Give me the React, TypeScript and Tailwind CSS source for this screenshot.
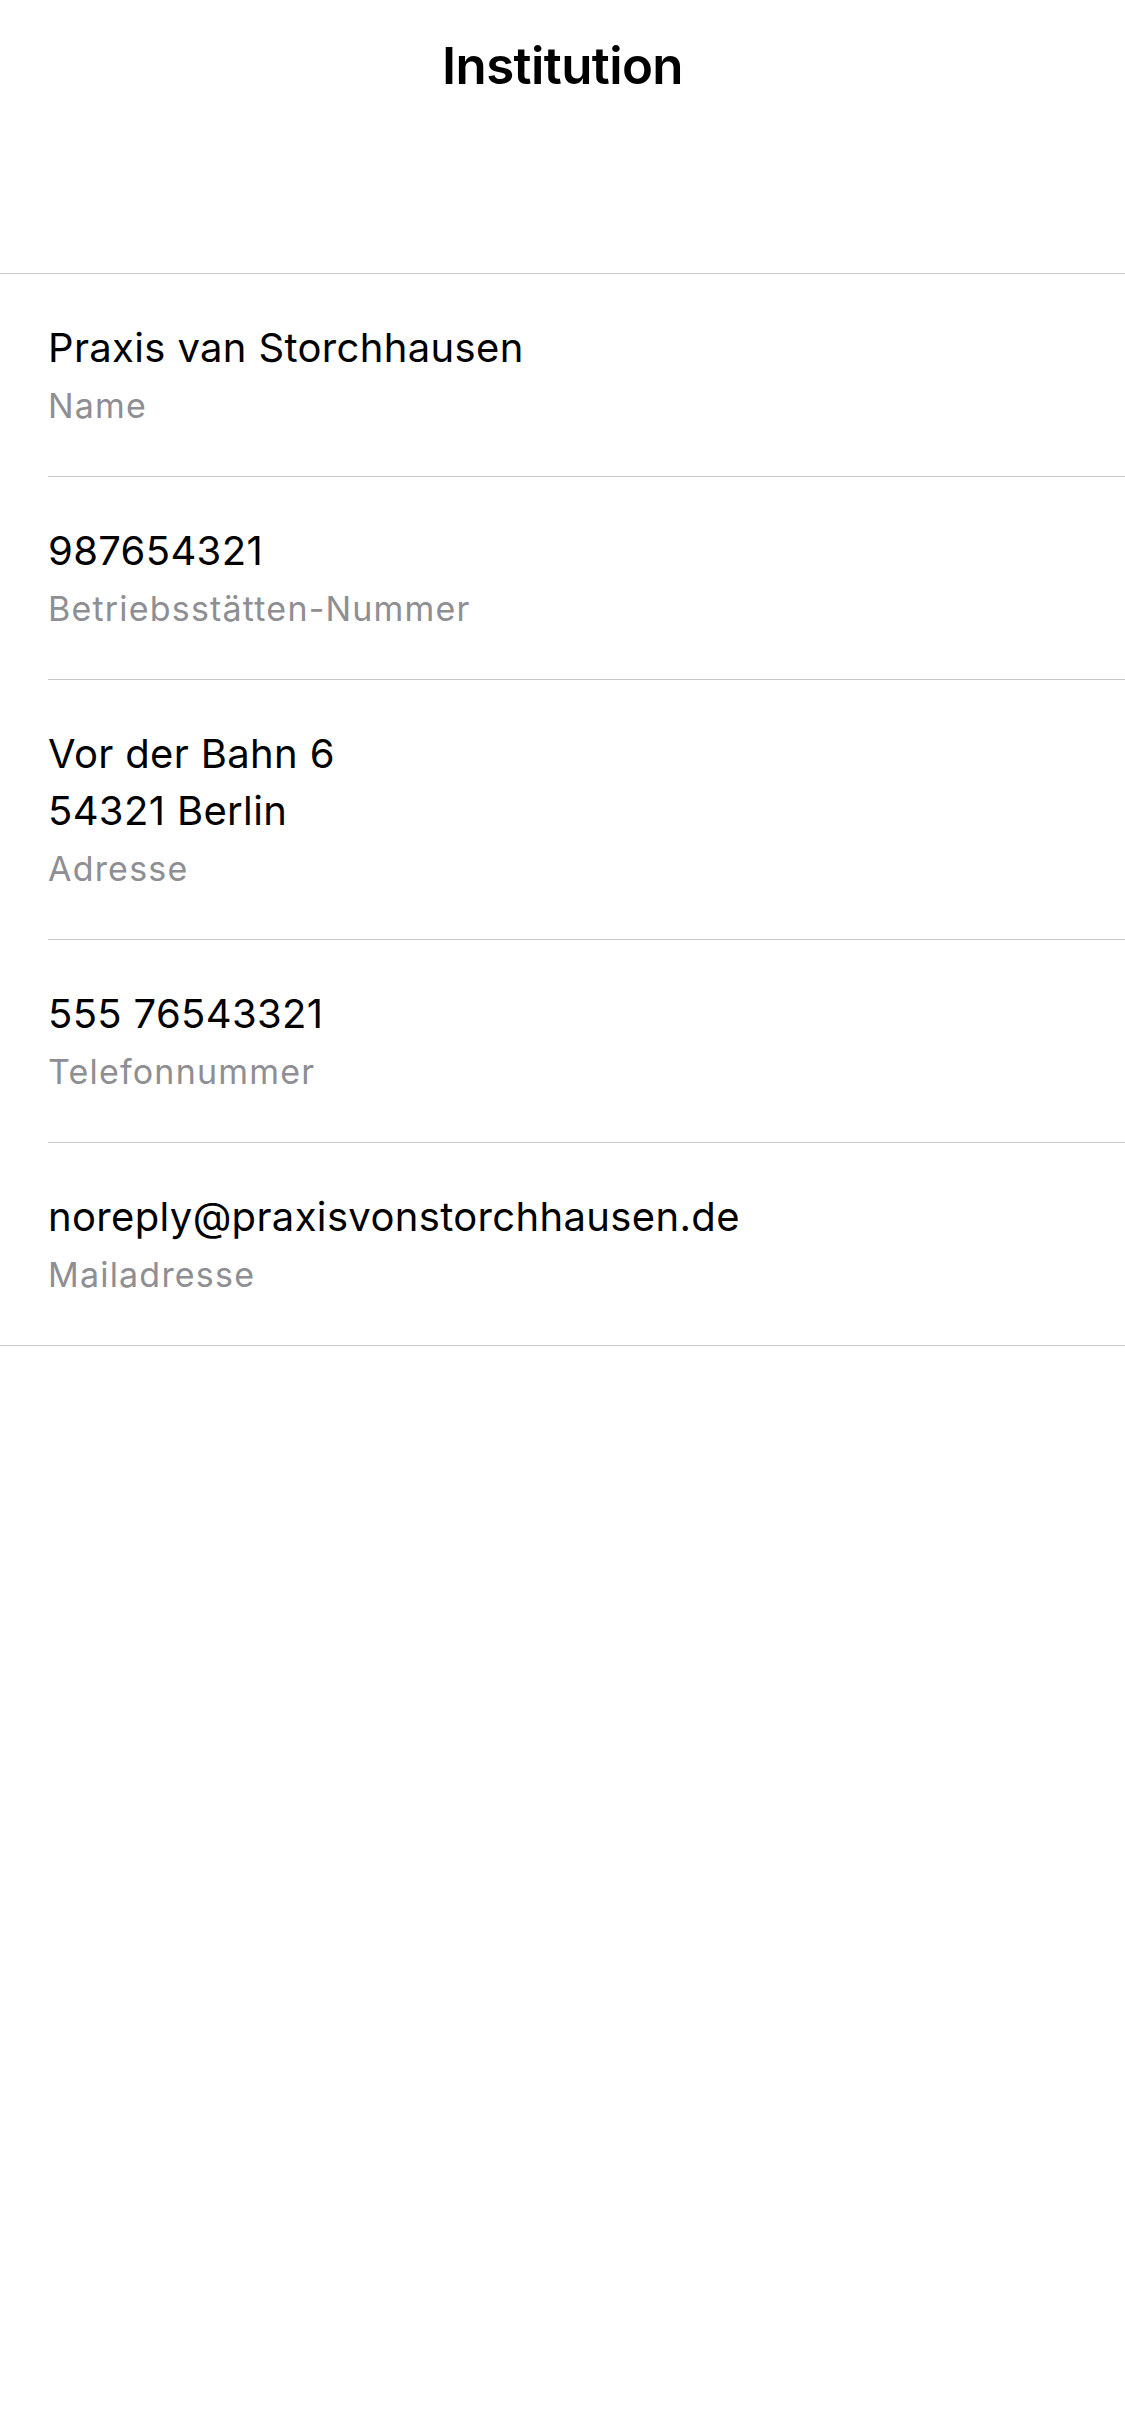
const rows = [
  { value: ["Praxis van Storchhausen"], label: "Name" },
  { value: ["987654321"], label: "Betriebsstätten-Nummer" },
  { value: ["Vor der Bahn 6", "54321 Berlin"], label: "Adresse" },
  { value: ["555 76543321"], label: "Telefonnummer" },
  { value: ["noreply@praxisvonstorchhausen.de"], label: "Mailadresse" },
];

export default function App() {
  return (
    <div className="min-h-[2436px] w-full bg-white [font-family:Inter,'Noto_Sans',sans-serif]">
      {/* nav bar */}
      <div className="h-[273px] pt-[35px]">
        <h1 className="text-center text-[51px] leading-[61px] font-semibold tracking-[-0.6px] text-black">
          Institution
        </h1>
      </div>

      {/* detail list */}
      <div className="border-t border-b border-[#c8c7cc]">
        {rows.map((row, i) => (
          <div key={row.label} className="pl-[48px]">
            <div
              className={`pt-[45px] pb-[50px] ${
                i < rows.length - 1 ? "border-b border-[#c8c7cc]" : ""
              }`}
            >
              {row.value.map((line) => (
                <div key={line} className="text-[40px] leading-[57px] tracking-[0.35px] text-black">
                  {line}
                </div>
              ))}
              <div className="mt-[10px] text-[34px] leading-[40px] tracking-[1.2px] text-[#8e8e93]">
                {row.label}
              </div>
            </div>
          </div>
        ))}
      </div>
    </div>
  );
}
